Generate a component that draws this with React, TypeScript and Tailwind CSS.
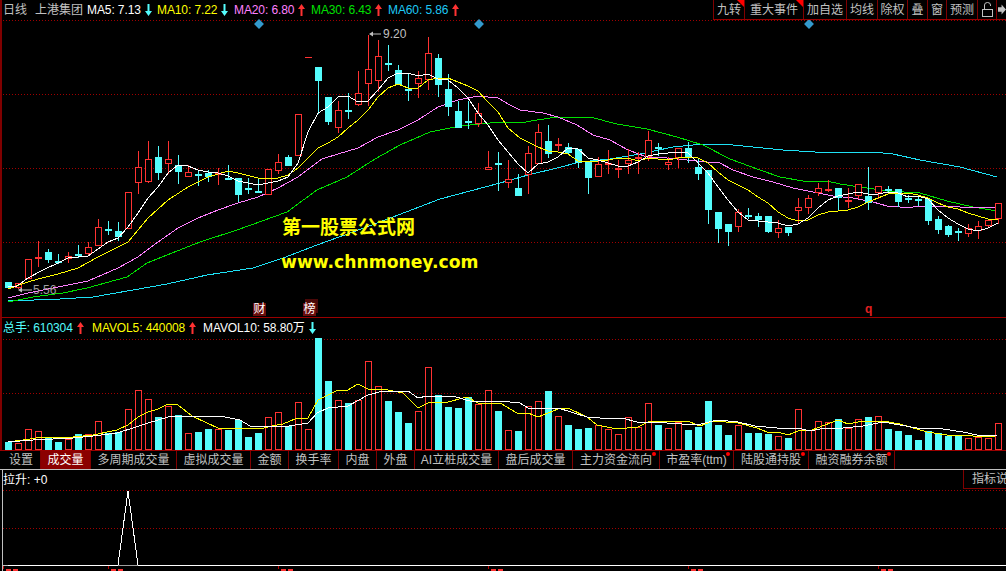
const sans = "font-['Liberation_Sans','Noto_Sans_CJK_SC',sans-serif]"

// [high, bodyTop, bodyBottom, low, isRed, volumeTop]
const bars: number[][] = [
  [282, 282, 287, 287, 0, 442], [283, 283, 287, 288, 1, 443], [259, 259, 278, 278, 1, 429], [241, 257, 258, 266, 1, 431],
  [249, 252, 259, 262, 0, 437], [254, 261, 262, 263, 0, 442], [252, 256, 258, 262, 1, 439], [245, 254, 255, 257, 0, 434],
  [242, 247, 253, 255, 1, 434], [219, 227, 245, 245, 1, 421], [221, 229, 230, 234, 0, 433], [222, 231, 236, 240, 0, 432],
  [192, 192, 228, 228, 1, 409], [151, 167, 182, 193, 1, 390], [141, 159, 181, 182, 1, 399], [146, 157, 172, 179, 0, 417],
  [141, 159, 163, 173, 1, 406], [155, 165, 171, 183, 0, 415], [165, 172, 176, 176, 1, 433], [170, 174, 175, 185, 0, 432],
  [170, 173, 176, 181, 0, 429], [168, 173, 174, 184, 1, 429], [165, 178, 179, 179, 0, 430], [178, 178, 194, 201, 0, 420],
  [178, 188, 189, 193, 0, 437], [178, 191, 192, 192, 0, 433], [169, 169, 194, 194, 1, 417], [154, 162, 170, 173, 1, 412],
  [155, 157, 165, 165, 0, 426], [114, 114, 155, 155, 1, 402], [57, 57, 57, 57, 1, 429], [67, 67, 80, 113, 0, 338],
  [97, 97, 121, 124, 0, 381], [101, 110, 127, 132, 1, 400], [93, 110, 111, 118, 0, 403], [71, 93, 104, 105, 1, 400],
  [35, 69, 83, 105, 1, 361], [40, 56, 80, 91, 1, 386], [45, 63, 64, 70, 0, 401], [65, 70, 84, 84, 0, 412],
  [73, 89, 90, 100, 0, 423], [71, 78, 83, 97, 1, 411], [37, 53, 79, 89, 1, 367], [54, 58, 84, 96, 0, 395],
  [74, 89, 106, 115, 0, 407], [101, 111, 127, 127, 0, 408], [101, 121, 122, 128, 0, 397], [103, 113, 123, 126, 1, 404],
  [151, 167, 169, 169, 1, 390], [152, 163, 164, 190, 0, 411], [160, 179, 182, 187, 1, 430], [174, 188, 195, 195, 0, 431],
  [146, 153, 174, 193, 1, 406], [124, 132, 163, 163, 1, 401], [125, 141, 153, 157, 0, 391], [138, 144, 145, 150, 1, 416],
  [143, 147, 152, 153, 0, 425], [149, 149, 162, 167, 0, 429], [162, 162, 177, 193, 0, 428], [157, 164, 176, 176, 1, 425],
  [150, 163, 164, 173, 1, 429], [160, 168, 169, 177, 1, 434], [149, 160, 163, 173, 1, 417], [152, 157, 158, 173, 1, 427],
  [131, 140, 156, 160, 1, 403], [143, 147, 148, 155, 0, 425], [157, 162, 164, 169, 1, 428], [148, 148, 157, 167, 1, 422],
  [142, 148, 156, 162, 0, 430], [158, 167, 173, 179, 0, 427], [170, 170, 209, 223, 0, 401], [212, 212, 228, 242, 0, 425],
  [224, 224, 231, 245, 0, 435], [209, 212, 226, 231, 1, 425], [208, 215, 216, 218, 0, 433], [213, 216, 219, 226, 0, 433],
  [216, 216, 231, 232, 0, 434], [220, 228, 232, 237, 1, 436], [227, 227, 232, 235, 0, 438], [198, 207, 210, 222, 1, 409],
  [195, 198, 207, 213, 1, 430], [183, 188, 192, 195, 1, 421], [180, 189, 190, 191, 1, 422], [188, 188, 197, 209, 0, 419],
  [188, 200, 201, 207, 1, 428], [184, 184, 195, 198, 1, 419], [167, 196, 202, 209, 0, 417], [186, 186, 192, 198, 1, 416],
  [186, 189, 190, 193, 0, 429], [189, 189, 201, 206, 0, 431], [195, 198, 199, 202, 0, 435], [197, 199, 200, 205, 0, 440],
  [199, 199, 220, 224, 0, 431], [216, 219, 229, 233, 0, 433], [225, 226, 234, 236, 0, 436], [228, 231, 232, 240, 0, 436],
  [224, 228, 233, 236, 1, 438], [221, 226, 230, 238, 1, 437], [220, 220, 225, 227, 1, 438], [203, 203, 218, 223, 1, 423],
]

const ma5 = '8,287 17,286 28,278 43,270 58,263 68,258 88,256 98,249 108,242 118,238 128,227 138,213 148,198 158,187 168,173 178,165 188,166 198,170 208,172 218,173 228,176 238,181 248,183 258,185 268,183 278,181 288,177 298,163 308,132 318,113 328,107 338,97 348,96 358,102 368,101 378,90 388,78 398,73 408,73 418,76 428,74 438,79 448,80 458,88 468,98 478,113 488,125 498,140 508,152 518,164 528,173 538,164 548,162 558,157 568,148 578,149 588,158 598,160 608,163 618,166 628,166 638,162 648,156 658,154 668,153 678,152 688,153 698,163 708,173 718,187 728,200 738,212 748,220 758,221 768,222 778,223 788,226 798,224 808,218 818,208 828,200 838,196 848,194 858,192 868,194 878,194 888,192 898,193 908,197 918,196 928,199 938,210 948,218 958,224 968,229 978,231 988,228 998,223'
const ma10 = '8,289 28,282 38,279 58,274 78,268 98,257 118,247 128,242 138,230 148,218 168,200 188,187 208,177 228,171 238,173 258,178 278,178 288,175 298,168 308,158 318,148 328,143 338,137 348,128 358,120 368,110 378,97 388,88 398,84 408,88 418,88 428,80 438,78 448,78 458,82 468,86 478,91 488,102 498,112 508,128 520,138 528,142 538,147 548,151 558,152 568,154 578,161 588,162 598,161 608,160 618,158 628,158 638,161 648,158 658,159 668,160 678,158 688,157 698,158 708,163 718,172 728,180 738,185 748,190 758,197 768,203 778,212 788,218 798,221 808,220 818,215 828,212 838,211 848,210 858,207 868,202 878,198 888,194 898,193 908,193 918,195 928,198 938,203 948,207 958,209 968,213 978,216 988,219 998,219'
const ma20 = '8,298 28,293 58,287 88,281 118,268 138,257 158,242 178,228 198,218 218,210 238,203 258,197 278,188 298,177 322,159 338,154 358,148 378,137 398,130 418,120 438,107 458,100 478,96 498,98 510,105 520,110 543,113 558,117 577,125 593,135 610,140 628,150 647,157 667,158 687,160 707,162 718,162 733,170 753,177 773,182 793,188 813,192 833,196 853,198 873,202 887,206 900,207 913,207 933,206 960,207 977,207 997,207'
const ma30 = '8,302 33,297 63,293 87,288 127,277 147,263 167,255 200,242 237,230 287,212 317,190 347,177 375,159 400,145 430,132 460,126 500,122 520,123 537,120 557,117 590,117 617,124 647,129 677,137 703,145 730,159 760,170 780,177 803,181 827,181 840,184 860,187 887,191 920,193 947,201 973,207 997,211'
const ma60 = '8,301 60,299 93,297 133,290 167,284 207,275 253,268 283,258 317,245 353,232 393,217 440,199 500,183 528,175 557,168 580,162 610,159 640,154 673,147 703,144 723,144 753,147 783,150 815,152 873,152 893,154 920,160 960,167 997,177'
const vol5 = '8,442 23,440 43,437 73,437 93,435 117,430 128,425 138,417 148,412 158,409 168,404 178,405 192,416 207,423 218,428 238,428 260,429 272,426 283,424 295,419 308,418 318,400 328,395 338,390 348,390 358,384 368,389 388,390 403,393 418,408 428,403 448,402 467,397 478,403 500,403 517,413 528,413 538,417 558,409 568,408 587,417 597,425 617,429 638,427 648,422 668,421 690,422 700,426 713,421 738,423 757,428 767,432 778,432 788,435 798,431 812,430 838,420 848,424 858,422 883,421 900,424 927,432 947,435 973,436 993,437 997,435'
const vol10 = '8,442 33,440 73,438 93,436 117,433 133,428 148,423 168,417 197,416 220,416 240,420 250,426 283,427 308,423 317,413 328,408 348,406 368,395 383,391 408,391 418,398 427,396 453,396 473,402 500,401 520,403 528,408 543,409 558,408 587,417 600,418 622,418 637,422 667,423 697,425 717,420 738,422 755,426 777,428 787,429 798,428 810,431 825,428 843,428 863,426 883,422 917,428 943,429 963,432 977,435 997,435'

const RED = '#ff3232'
const CYAN = '#54fcfc'

const Grid = ({ ys }: { ys: number[] }) => (
  <>
    {ys.map(y => (
      <line key={y} x1={3} x2={1006} y1={y + 0.5} y2={y + 0.5} stroke="#a00000" strokeDasharray="1 2" shapeRendering="crispEdges" />
    ))}
  </>
)

const Candles = () => (
  <>
    {bars.map(([h, t, b, l, up], i) => {
      const x = 5 + i * 10
      const color = up ? RED : CYAN
      const doji = b - t <= 1
      return (
        <g key={i} shapeRendering="crispEdges">
          <rect x={x + 3} y={h} width={1} height={l - h + 1} fill={color} opacity={up && !doji ? 0 : 1} />
          {up && !doji ? (
            <>
              <rect x={x + 3} y={h} width={1} height={t - h} fill={color} />
              <rect x={x + 3} y={b} width={1} height={l - b + 1} fill={color} />
              <rect x={x + 0.5} y={t + 0.5} width={6} height={b - t} fill="#000" stroke={color} />
            </>
          ) : (
            <rect x={x} y={t} width={7} height={doji ? (b === t ? 1 : 2) : b - t + 1} fill={color} />
          )}
        </g>
      )
    })}
  </>
)

const Volumes = () => (
  <>
    {bars.map((d, i) => {
      const x = 5 + i * 10
      const top = d[5]
      return d[4] ? (
        <rect key={i} x={x + 0.5} y={top + 0.5} width={6} height={449 - top} fill="#000" stroke={RED} shapeRendering="crispEdges" />
      ) : (
        <rect key={i} x={x} y={top} width={7} height={450 - top} fill={CYAN} shapeRendering="crispEdges" />
      )
    })}
  </>
)

const Line = ({ points, color }: { points: string; color: string }) => (
  <polyline points={points} fill="none" stroke={color} strokeWidth={1} shapeRendering="crispEdges" />
)

const Arrow = ({ up }: { up?: boolean }) => (
  <svg width="7" height="12" viewBox="0 0 7 12" className="shrink-0">
    {up ? (
      <path d="M3.5 0 L7 5 H4.5 V12 H2.5 V5 H0 Z" fill="#ff3232" />
    ) : (
      <path d="M3.5 12 L7 7 H4.5 V0 H2.5 V7 H0 Z" fill="#54fcfc" />
    )}
  </svg>
)

const Diamond = ({ x }: { x: number }) => (
  <rect x={x - 3.5} y={20.5} width={7} height={7} fill="#3399cc" transform={`rotate(45 ${x} 24)`} />
)

const Legend = ({ label, value, color, up, width }: any) => (
  <div className={`flex items-center shrink-0 ${width}`} style={{ color }}>
    <span className="whitespace-pre tracking-[-0.1px]">{label}: {value}</span>
    <span className="ml-1"><Arrow up={up} /></span>
  </div>
)

const toolButtons = [
  { label: '九转', w: 'w-[31px]', flag: true },
  { label: '重大事件', w: 'w-[59px]', flag: true },
  { label: '加自选', w: 'w-[43px]' },
  { label: '均线', w: 'w-[31px]' },
  { label: '除权', w: 'w-[30px]' },
  { label: '叠', w: 'w-[20px]' },
  { label: '窗', w: 'w-[19px]' },
  { label: '预测', w: 'w-[31px]' },
]

const tabs = [
  { label: '设置', w: 'w-[39px]' },
  { label: '成交量', w: 'w-[50px]', active: true },
  { label: '多周期成交量', w: 'w-[86px]' },
  { label: '虚拟成交量', w: 'w-[74px]' },
  { label: '金额', w: 'w-[38px]' },
  { label: '换手率', w: 'w-[50px]' },
  { label: '内盘', w: 'w-[38px]' },
  { label: '外盘', w: 'w-[38px]' },
  { label: 'AI立桩成交量', w: 'w-[84px]' },
  { label: '盘后成交量', w: 'w-[74px]' },
  { label: '主力资金流向', w: 'w-[87px]', dot: true },
  { label: '市盈率(ttm)', w: 'w-[74px]', dot: true },
  { label: '陆股通持股', w: 'w-[75px]', dot: true },
  { label: '融资融券余额', w: 'w-[86px]', dot: true },
]

export default function App() {
  return (
    <div className={`w-[1006px] h-[571px] bg-black overflow-hidden flex flex-col text-[12px] text-[#c0c0c0] ${sans}`}>
      {/* K line pane */}
      <div className="relative h-[318px] shrink-0 border-b border-[#9a0000] border-l-2 border-l-[#800000]">
        <svg className="absolute left-[-2px] top-0" width="1006" height="317" viewBox="0 0 1006 317">
          <Grid ys={[20, 94, 168, 242]} />
          <Line points={ma60} color="#1ee1f5" />
          <Line points={ma30} color="#00e000" />
          <Line points={ma20} color="#ff80ff" />
          <Candles />
          <Line points={ma10} color="#ffff00" />
          <Line points={ma5} color="#ffffff" />
          <Diamond x={259} />
          <Diamond x={479} />
          <Diamond x={809} />
          <path d="M369 34 L373 31.5 V33.5 H381 V34.5 H373 V36.5 Z" fill="#c0c0c0" />
          <path d="M18 290 L22 287.5 V289.5 H32 V290.5 H22 V292.5 Z" fill="#c0c0c0" />
        </svg>

        <div className="relative flex items-start h-[20px]">
          <div className="flex items-center h-[19px] pl-px">
            <span className="w-[32px]">日线</span>
            <span className="w-[52px] whitespace-nowrap">上港集团</span>
            <Legend label="MA5" value="7.13" color="#ffffff" width="w-[70px]" />
            <Legend label="MA10" value="7.22" color="#ffff00" width="w-[77px]" />
            <Legend label="MA20" value="6.80" color="#ff80ff" up width="w-[77px]" />
            <Legend label="MA30" value="6.43" color="#00e000" up width="w-[77px]" />
            <Legend label="MA60" value="5.86" color="#1ec8f5" up width="w-[70px]" />
          </div>
          <div className="ml-auto flex h-[20px] border-b border-[#9a0000]">
            {toolButtons.map(b => (
              <div key={b.label} className={`relative flex items-center justify-center whitespace-nowrap border-l border-[#800000] ${b.w}`}>
                {b.label}
                {b.flag && <span className="absolute right-0 top-0 w-0 h-0 border-l-[7px] border-l-transparent border-t-[7px] border-t-[#ff0000]" />}
              </div>
            ))}
            <div className="flex items-center justify-center border-l border-[#800000] w-[19px]">
              <svg width="13" height="16" viewBox="0 0 13 16" fill="none" stroke="#c0c0c0">
                <path d="M3.5 7 V3 Q3.5 .5 6.5 .5 Q9.5 .5 9.5 3 V4" />
                <rect x="1.5" y="7.5" width="10" height="7" />
              </svg>
            </div>
            <div className="flex items-center border-l border-[#800000] w-[10px] pl-[1px]">
              <svg width="9" height="11" viewBox="0 0 9 11">
                <path d="M0 3 H4 V0 L9 5.5 L4 11 V8 H0 Z" fill="#c0c0c0" />
              </svg>
            </div>
          </div>
        </div>

        {/* watermark and markers sit on top of the chart */}
        <div className="absolute left-[280px] top-[217px] text-[19px] leading-[22px] font-bold text-[#ffff00] whitespace-nowrap">第一股票公式网</div>
        <div className="absolute left-[279px] top-[251px] text-[17.2px] leading-[22px] font-bold text-[#ffff00] whitespace-nowrap font-['DejaVu_Sans',sans-serif]">www.chnmoney.com</div>
        <div className="absolute left-[381px] top-[27px] leading-[14px]">9.20</div>
        <div className="absolute left-[31px] top-[283px] leading-[14px] text-[#a0a0a0]">5.56</div>
        <div className="absolute left-[251px] top-[303px] w-[13px] h-[13px] bg-[#6a0d0d] text-white leading-[13px] text-center">财</div>
        <div className="absolute left-[303px] top-[299px] w-[13px] h-[14px] bg-[#4a0808]" />
        <div className="absolute left-[301px] top-[303px] w-[13px] h-[13px] bg-[#6a0d0d] text-white leading-[13px] text-center">榜</div>
        <div className="absolute left-[863px] top-[302px] leading-[14px] font-bold text-[#e02020]">q</div>
      </div>

      {/* volume pane */}
      <div className="relative h-[132px] shrink-0 border-l-2 border-l-[#800000]">
        <svg className="absolute left-[-2px] top-0" width="1006" height="132" viewBox="0 318 1006 132">
          <Grid ys={[339, 393]} />
          <Volumes />
          <Line points={vol5} color="#ffff00" />
          <Line points={vol10} color="#ffffff" />
        </svg>
        <div className="relative flex items-center h-[19px] pl-px">
          <Legend label="总手" value="610304" color="#54fcfc" up width="w-[89px]" />
          <Legend label="MAVOL5" value="440008" color="#ffff00" up width="w-[111px]" />
          <Legend label="MAVOL10" value="58.80万" color="#ffffff" width="w-[115px]" />
        </div>
      </div>

      {/* indicator tabs */}
      <div className="flex h-[20px] shrink-0 border-t border-[#9a0000] border-b border-b-[#c0c0c0] pl-[2px]">
        {tabs.map(t => (
          <div
            key={t.label}
            className={`relative flex items-center justify-center whitespace-nowrap border-r border-[#800000] ${t.w} ${t.active ? 'bg-[#8b0000] text-white' : ''}`}
          >
            {t.label}
            {t.dot && <span className="absolute right-[3px] top-[1px] w-[4px] h-[4px] rounded-full bg-[#ff0000]" />}
          </div>
        ))}
      </div>

      {/* bottom pane */}
      <div className="relative flex-1 min-h-0 border-l border-l-[#c0c0c0] ml-[2px]">
        <svg className="absolute left-[-3px] top-0" width="1006" height="96" viewBox="0 470 1006 96">
          <Grid ys={[490, 528]} />
          <polyline points="118,565 128,491 138,565" fill="none" stroke="#ffffff" shapeRendering="crispEdges" />
          <rect x="8" y="565" width="998" height="1" fill="#ffffff" />
          <rect x="2" y="565" width="6" height="1" fill="#c0c0c0" />
          <rect x="118" y="565" width="20" height="1" fill="#a0a0a0" />
        </svg>
        <div className="relative flex items-start justify-between">
          <div className="leading-[20px] text-white whitespace-nowrap">拉升: +0</div>
          <div className="w-[43px] h-[19px] overflow-hidden whitespace-nowrap border-l border-b border-[#800000] leading-[18px] pl-2">指标说明</div>
        </div>
        <svg className="absolute left-[-3px] top-[96px]" width="1006" height="6" viewBox="0 0 1006 6">
          {[3, 108, 278, 488, 688, 878].map(x => (
            <g key={x}>
              <rect x={x} y={0} width={1} height={3} fill="#c00000" />
              <rect x={x + 3} y={3} width={5} height={2} fill="#ff3232" />
              <rect x={x + 10} y={3} width={5} height={2} fill="#ff3232" />
            </g>
          ))}
        </svg>
      </div>
    </div>
  )
}
